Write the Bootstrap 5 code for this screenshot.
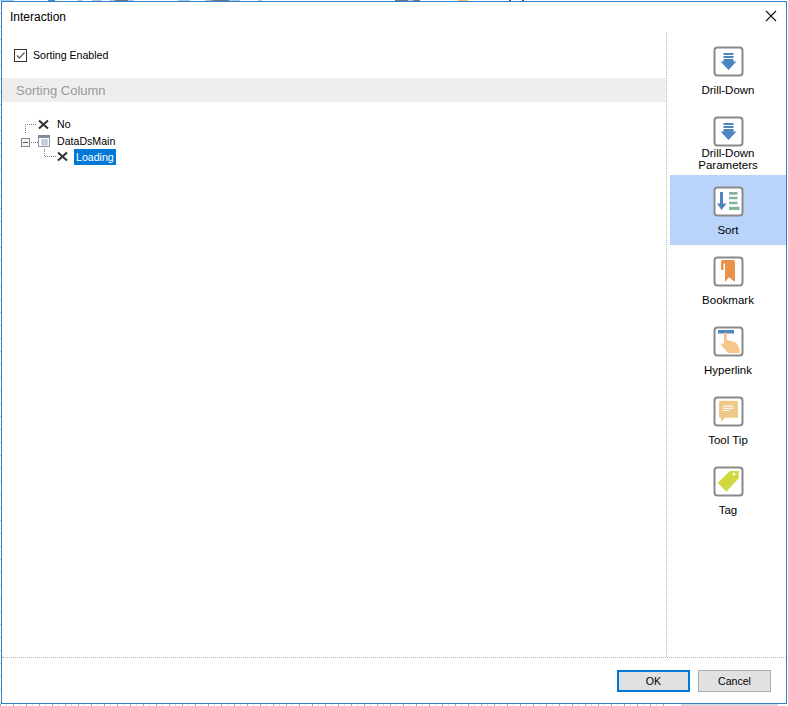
<!DOCTYPE html>
<html lang="en">
<head>
<meta charset="utf-8">
<title>Interaction</title>
<link rel="stylesheet" href="https://cdn.jsdelivr.net/npm/bootstrap@5.3.0/dist/css/bootstrap.min.css">
<style>
html,body{height:706px;overflow:hidden;}
body{font-family:"Liberation Sans",Arial,sans-serif;font-size:11.5px;color:#000;line-height:14px;
background-color:#fff;
background-repeat:no-repeat,no-repeat,no-repeat,repeat-y;
background-position:0 0,0 704px,681px 704px,0 0;
background-size:788px 1px,665px 2px,97px 2px,1px 13px;
background-image:
linear-gradient(90deg,#a8cdf5 0 14px,#fff 14px 48px,#4a8ad0 48px 55px,#fff 55px 78px,#a8cdf5 78px 82px,#fff 82px 92px,#a8cdf5 92px 102px,#fff 102px 110px,#a8cdf5 110px 115px,#6e7680 115px 128px,#a8cdf5 128px 134px,#fff 134px 178px,#a8cdf5 178px 190px,#fff 190px 205px,#a8cdf5 205px 208px,#6e7680 215px 229px,#a8cdf5 229px 240px,#fff 240px 258px,#a8cdf5 258px 262px,#fff 262px 395px,#6e7680 395px 408px,#a8cdf5 408px 412px,#6e7680 414px 420px,#fff 420px 458px,#f0c080 458px 468px,#fff 468px 509px,#555 509px 511px,#fff 511px 522px,#555 522px 524px,#fff 524px),
repeating-linear-gradient(90deg,#aaa 0 1px,#fff 1px 6px,#ddd 6px 7px,#fff 7px 13px),
linear-gradient(#d5d9e0,#d5d9e0),
linear-gradient(#c4c4c4 0 1px,#fff 1px);}
.dlg{width:786px;height:703px;margin:1px 0 0 1px;border:1px solid #2f7fc4;background:#fff;}
.dlg-title{height:30px;padding:8px 0 0 8px;font-size:12px;}
.dlg-close{padding:0;border:0;background:none;margin:8px 9px 0 0;width:12px;height:12px;display:block;}
.dlg-main{height:625px;}
.left-pane{width:665px;border-right:1px dotted #b5b5b5;font-size:10.6px;}
.chk-row{height:46px;padding:17px 0 0 12px;gap:6px;}
.chk-box{width:13px;height:13px;display:block;flex:none;}
.chk-lbl{margin-top:-1px;}
.sort-head{height:24px;background:#eeeeee;color:#9a9a9a;font-size:13px;padding:6px 0 0 14px;}
.tree-wrap{padding:14px 0 0 0;}
.tree-line{height:16px;position:relative;}
.tree-line.first-row{height:17px;}
.tree-svg{display:block;}
.tree-lbl{position:absolute;top:1px;left:55px;}
.tree-sel{background:#0078d7;color:#fff;padding:1px 2px 0;height:16px;top:0;left:72px;}
.side-pane{width:119px;padding:3px 0 0 3px;}
.side-item{height:70px;padding-top:11px;color:#000;}
.side-item.on{background:#b9d3fb;}
.side-ico{width:31px;height:31px;display:block;margin:0 auto 7px;}
.two-line .side-ico{margin-bottom:0;}
.side-txt{line-height:12px;}
.dlg-foot{height:46px;border-top:1px dotted #b5b5b5;padding:12px 15px 0 0;gap:8px;}
.dlg-btn{width:73px;height:22px;padding:0;background:#e1e1e1;color:#000;font-size:10.6px;line-height:16px;border-radius:0;border:1px solid #adadad;}
.dlg-btn.pri{border:2px solid #0078d7;}
</style>
</head>
<body>
<div class="dlg d-flex flex-column">
  <div class="d-flex justify-content-between">
    <div class="dlg-title">Interaction</div>
    <button class="dlg-close" type="button" aria-label="Close"><svg class="d-block" width="12" height="12" viewBox="0 0 12 12"><path d="M1 1 11 11M11 1 1 11" stroke="#111" stroke-width="1.1" fill="none"/></svg></button>
  </div>
  <div class="dlg-main d-flex">
    <div class="left-pane">
      <div class="chk-row d-flex align-items-start">
        <svg class="chk-box" viewBox="0 0 13 13"><rect x=".5" y=".5" width="12" height="12" fill="#fff" stroke="#333"/><path d="M3 6.500 5.500 9 10.500 3.500" stroke="#555" stroke-width="1.200" fill="none"/></svg>
        <span class="chk-lbl">Sorting Enabled</span>
      </div>
      <div class="sort-head">Sorting Column</div>
      <div class="tree-wrap">
        <div class="tree-line first-row">
          <svg class="tree-svg" width="60" height="17"><path d="M23.500 17V8.500H35" stroke="#777" stroke-dasharray="1 1" fill="none"/><path d="M37 4.500 46 12.500M46 4.500 37 12.500" stroke="#333" stroke-width="2" fill="none"/></svg>
          <span class="tree-lbl">No</span>
        </div>
        <div class="tree-line">
          <svg class="tree-svg" width="60" height="16"><rect x="19.500" y="5.500" width="8" height="8" fill="#f4f4f4" stroke="#888"/><path d="M21 9.500H26" stroke="#555"/><path d="M29 9.500H36" stroke="#777" stroke-dasharray="1 1"/><rect x="36.500" y="2.500" width="11" height="11" fill="#fff" stroke="#8a97a8"/><rect x="36" y="2" width="12" height="3" fill="#7c8ca0"/><path d="M39 7H46M39 9H46M39 11H46M41 6V13M44 6V13" stroke="#a9b6c6"/></svg>
          <span class="tree-lbl">DataDsMain</span>
        </div>
        <div class="tree-line">
          <svg class="tree-svg" width="72" height="16"><path d="M42.500 0V7.500H54" stroke="#777" stroke-dasharray="1 1" fill="none"/><path d="M56 3.500 65 11.500M65 3.500 56 11.500" stroke="#333" stroke-width="2" fill="none"/></svg>
          <span class="tree-lbl tree-sel">Loading</span>
        </div>
      </div>
    </div>
    <div class="side-pane text-center">
      <div class="side-item">
        <svg class="side-ico" viewBox="0 0 31 31"><rect x="1.500" y="1.500" width="28" height="28" rx="3" fill="#fff" stroke="#8a8a8a" stroke-width="2"/><path d="M10.500 7H20.500V9H10.500ZM10.500 10H20.500V12H10.500ZM10.500 13H20.500V15.500H23.500L15.500 24 7.500 15.500H10.500Z" fill="#4d85c0"/></svg>
        <div class="side-txt">Drill-Down</div>
      </div>
      <div class="side-item two-line">
        <svg class="side-ico" viewBox="0 0 31 31"><rect x="1.500" y="1.500" width="28" height="28" rx="3" fill="#fff" stroke="#8a8a8a" stroke-width="2"/><path d="M10.500 7H20.500V9H10.500ZM10.500 10H20.500V12H10.500ZM10.500 13H20.500V15.500H23.500L15.500 24 7.500 15.500H10.500Z" fill="#4d85c0"/></svg>
        <div class="side-txt">Drill-Down<br>Parameters</div>
      </div>
      <div class="side-item on">
        <svg class="side-ico" viewBox="0 0 31 31"><rect x="1.500" y="1.500" width="28" height="28" rx="3" fill="#fff" stroke="#8a8a8a" stroke-width="2"/><path d="M7 6H10V17.500H13.500L8.500 24 4 17.500H7Z" fill="#4d85c0"/><path d="M16 6H24.500V8.700H16ZM16 10.700H24.500V13.300H16ZM16 15.700H24.500V18.300H16ZM16 20.700H26.500V24H16Z" fill="#84b3a0"/></svg>
        <div class="side-txt">Sort</div>
      </div>
      <div class="side-item">
        <svg class="side-ico" viewBox="0 0 31 31"><rect x="1.500" y="1.500" width="28" height="28" rx="3" fill="#fff" stroke="#8a8a8a" stroke-width="2"/><path d="M8 6C8 4.500 9 4 10 4H20C22 4 22 6 22 7V26L16 21.300 12 26V7.500H10.500V14H8Z" fill="#e8924a"/></svg>
        <div class="side-txt">Bookmark</div>
      </div>
      <div class="side-item">
        <svg class="side-ico" viewBox="0 0 31 31"><rect x="1.500" y="1.500" width="28" height="28" rx="3" fill="#fff" stroke="#8a8a8a" stroke-width="2"/><path d="M5 4H21V7.500H5Z" fill="#4d85c0"/><path d="M11 7.500C11 6 14 6 14 7.500V14L22 16C25 18 27 23 27 27H15L8 19C8 17 9.500 17 11 18Z" fill="#f7c68a"/></svg>
        <div class="side-txt">Hyperlink</div>
      </div>
      <div class="side-item">
        <svg class="side-ico" viewBox="0 0 31 31"><rect x="1.500" y="1.500" width="28" height="28" rx="3" fill="#fff" stroke="#8a8a8a" stroke-width="2"/><path d="M7 4.700H24C24.500 4.700 25 5 25 6V21C25 21.700 24.500 21.700 24 21.700H12L8 26V21.700H7C6.500 21.700 6 21.500 6 21V6C6 5 6.500 4.700 7 4.700Z" fill="#efc98a"/><path d="M10 10H20.500M10 12.300H20.500M10 14.500H16" stroke="#fff" fill="none"/></svg>
        <div class="side-txt">Tool Tip</div>
      </div>
      <div class="side-item">
        <svg class="side-ico" viewBox="0 0 31 31"><rect x="1.500" y="1.500" width="28" height="28" rx="3" fill="#fff" stroke="#8a8a8a" stroke-width="2"/><path d="M4.700 16.700 17 5H25.700V12.300L13.300 25.700Z" fill="#cfd93f"/><circle cx="21" cy="8" r="1.300" fill="#fff"/></svg>
        <div class="side-txt">Tag</div>
      </div>
    </div>
  </div>
  <div class="dlg-foot d-flex justify-content-end">
    <button type="button" class="btn dlg-btn pri">OK</button>
    <button type="button" class="btn dlg-btn">Cancel</button>
  </div>
</div>
</body>
</html>
